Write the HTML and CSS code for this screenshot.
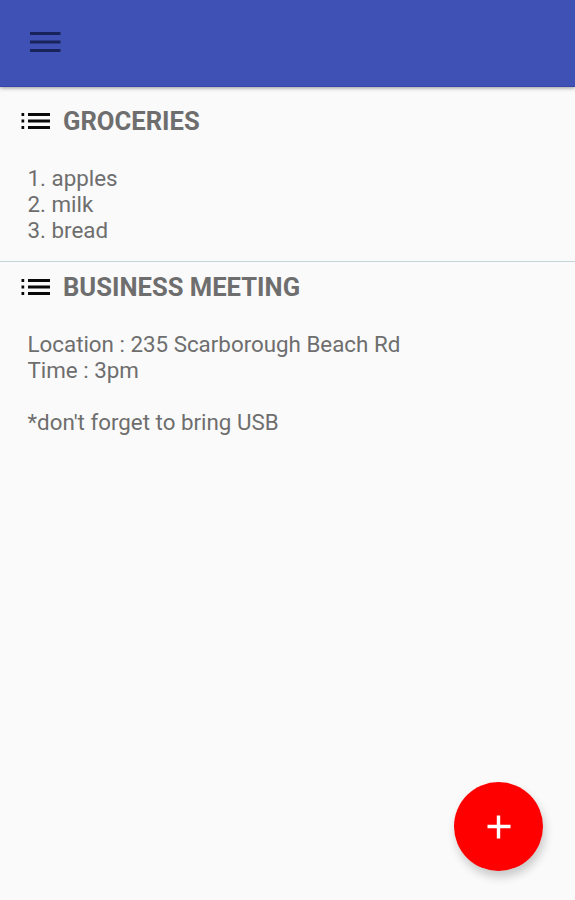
FILE: index.html
```html
<!DOCTYPE html>
<html lang="en">
<head>
  <meta charset="UTF-8" />
  <meta name="viewport" content="width=device-width, initial-scale=1.0"/>
  <title>Notes</title>
  <link rel="stylesheet" href="styles.css">
</head>
<body>
  <header class="toolbar">
    <button class="menu-button" aria-label="Open menu">
      <svg width="32" height="24" viewBox="0 0 32 24">
        <path d="M1 3.5h30.5M1 12h30.5M1 20.5h30.5" stroke="#18235c" stroke-width="2.8"/>
      </svg>
    </button>
  </header>

  <main class="notes">
    <article class="note">
      <h2 class="note-title">
        <svg class="list-icon" width="29" height="18" viewBox="0 0 29 18">
          <path d="M0.5 2.5h2.7M0.5 9h2.7M0.5 15.5h2.7M7 2.5h22M7 9h22M7 15.5h22" stroke="#080808" stroke-width="2.8"/>
        </svg>
        <span>GROCERIES</span>
      </h2>
      <p class="note-text">1. apples
2. milk
3. bread</p>
    </article>

    <article class="note">
      <h2 class="note-title">
        <svg class="list-icon" width="29" height="18" viewBox="0 0 29 18">
          <path d="M0.5 2.5h2.7M0.5 9h2.7M0.5 15.5h2.7M7 2.5h22M7 9h22M7 15.5h22" stroke="#080808" stroke-width="2.8"/>
        </svg>
        <span>BUSINESS MEETING</span>
      </h2>
      <p class="note-text">Location : 235 Scarborough Beach Rd
Time : 3pm

*don't forget to bring USB</p>
    </article>
  </main>

  <button class="add-button" aria-label="Add note">
    <svg width="24" height="24" viewBox="0 0 24 24">
      <path d="M11.5 0.5v23M0.5 11.5h23" stroke="#fff" stroke-width="3.4"/>
    </svg>
  </button>
</body>
</html>
```
FILE: styles.css
```css
body {
  margin: 0;
  min-height: 100vh;
  font-family: Roboto, sans-serif;
  background-color: #fafafa;
  color: #6e6e6e;
}
button {
  border: none;
  padding: 0;
  cursor: pointer;
}
.toolbar {
  display: flex;
  align-items: center;
  height: 87px;
  padding: 0 29px;
  box-sizing: border-box;
  border-bottom: 1px solid #3545a8;
  background-color: #3f51b5;
  box-shadow: 0 1px 4px rgba(0, 0, 0, 0.4);
}
.menu-button {
  display: flex;
  margin-bottom: 3px;
  background: none;
}
.note {
  height: 165px;
  padding: 9px 21px 0;
  box-sizing: border-box;
}
.note:first-child {
  height: 175px;
  padding-top: 18px;
  border-bottom: 1px solid #c0d6d8;
}
.note-title {
  display: flex;
  align-items: center;
  gap: 13px;
  height: 32px;
  margin: 0;
  font-size: 25.6px;
  font-weight: bold;
  line-height: 32px;
}
.note-text {
  margin: 28px 0 0 6.5px;
  font-size: 22.35px;
  line-height: 26px;
  white-space: pre-line;
}
.add-button {
  position: fixed;
  right: 32px;
  bottom: 29px;
  display: flex;
  align-items: center;
  justify-content: center;
  width: 89px;
  height: 89px;
  border-radius: 50%;
  background-color: #ff0000;
  box-shadow: 2px 6px 10px rgba(0, 0, 0, 0.2);
}
```
